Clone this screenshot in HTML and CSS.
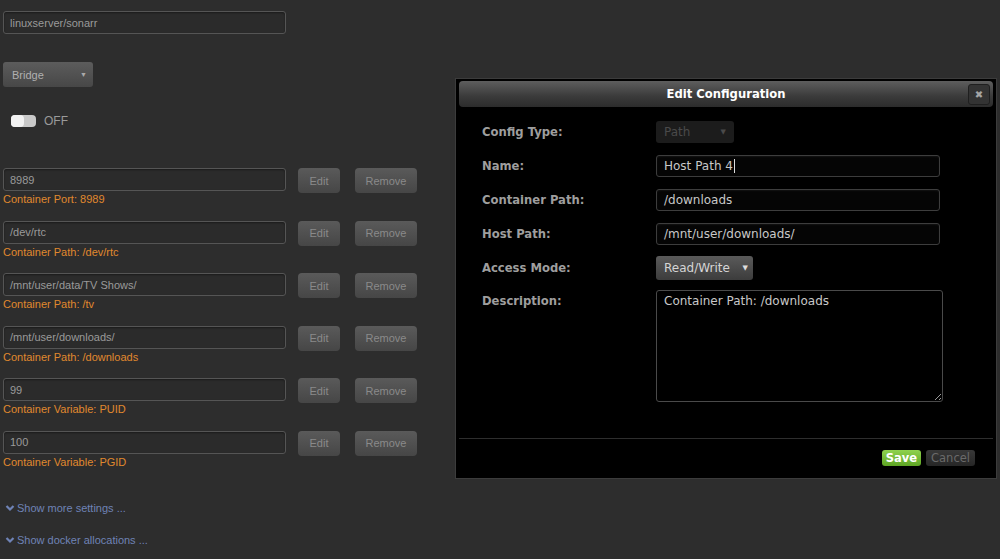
FILE: index.html
```html
<!DOCTYPE html>
<html>
<head>
<meta charset="utf-8">
<link rel="stylesheet" href="styles.css">
</head>
<body>
<div class="page">
  <div class="field wide">linuxserver/sonarr</div>
  <div class="sel net"><span>Bridge</span><span class="arrow">▼</span></div>
  <div class="toggle-row"><span class="toggle"><span class="knob"></span></span><span class="off">OFF</span></div>

  <div class="mappings">
    <div class="map">
      <div class="map-line"><div class="field wide">8989</div><span class="btn edit">Edit</span><span class="btn remove">Remove</span></div>
      <div class="note">Container Port: 8989</div>
    </div>
    <div class="map">
      <div class="map-line"><div class="field wide">/dev/rtc</div><span class="btn edit">Edit</span><span class="btn remove">Remove</span></div>
      <div class="note">Container Path: /dev/rtc</div>
    </div>
    <div class="map">
      <div class="map-line"><div class="field wide">/mnt/user/data/TV Shows/</div><span class="btn edit">Edit</span><span class="btn remove">Remove</span></div>
      <div class="note">Container Path: /tv</div>
    </div>
    <div class="map">
      <div class="map-line"><div class="field wide">/mnt/user/downloads/</div><span class="btn edit">Edit</span><span class="btn remove">Remove</span></div>
      <div class="note">Container Path: /downloads</div>
    </div>
    <div class="map">
      <div class="map-line"><div class="field wide">99</div><span class="btn edit">Edit</span><span class="btn remove">Remove</span></div>
      <div class="note">Container Variable: PUID</div>
    </div>
    <div class="map">
      <div class="map-line"><div class="field wide">100</div><span class="btn edit">Edit</span><span class="btn remove">Remove</span></div>
      <div class="note">Container Variable: PGID</div>
    </div>
  </div>

  <div class="links">
    <div class="link"><svg class="chev" viewBox="0 0 10 8" width="10" height="8"><path d="M1.5 2 L5 5.5 L8.5 2" fill="none" stroke="#6f83b6" stroke-width="2.2"/></svg>Show more settings ...</div>
    <div class="link"><svg class="chev" viewBox="0 0 10 8" width="10" height="8"><path d="M1.5 2 L5 5.5 L8.5 2" fill="none" stroke="#6f83b6" stroke-width="2.2"/></svg>Show docker allocations ...</div>
  </div>
</div>

<div class="dialog">
  <div class="titlebar">
    <span class="title">Edit Configuration</span>
    <span class="close">✖</span>
  </div>
  <div class="form">
    <div class="lbl">Config Type:</div>
    <div class="dsel disabled"><span>Path</span><span class="arrow">▼</span></div>
    <div class="lbl">Name:</div>
    <div class="dinput">Host Path 4<span class="caret"></span></div>
    <div class="lbl">Container Path:</div>
    <div class="dinput">/downloads</div>
    <div class="lbl">Host Path:</div>
    <div class="dinput">/mnt/user/downloads/</div>
    <div class="lbl">Access Mode:</div>
    <div class="dsel access"><span>Read/Write</span><span class="arrow">▼</span></div>
    <div class="lbl top">Description:</div>
    <textarea class="darea">Container Path: /downloads</textarea>
  </div>
  <div class="footer">
    <span class="save">Save</span>
    <span class="cancel">Cancel</span>
  </div>
</div>
</body>
</html>
```

FILE: styles.css
```css
html, body {
  margin: 0;
  padding: 0;
  background: #2d2d2d;
  width: 1000px;
  height: 559px;
  overflow: hidden;
}
body {
  font-family: "Liberation Sans", Arial, sans-serif;
  font-size: 11px;
  position: relative;
}
.page {
  padding: 11px 0 0 3px;
  display: flex;
  flex-direction: column;
}
.field {
  box-sizing: border-box;
  height: 23px;
  border: 1px solid #555;
  border-radius: 3px;
  background: #2b2b2b;
  box-shadow: inset 0 1px 2px rgba(0,0,0,0.4);
  color: #9a9a9a;
  padding: 0 6px;
  display: flex;
  align-items: center;
}
.wide { width: 283px; }
.sel {
  box-sizing: border-box;
  display: flex;
  align-items: center;
  justify-content: space-between;
  border-radius: 3px;
  background: linear-gradient(#5c5c5c, #474747);
  color: #b0b0b0;
  font-size: 11px;
}
.net {
  width: 90px;
  height: 25px;
  margin-top: 28px;
  padding: 0 6px 0 9px;
}
.arrow { font-size: 7px; color: #aaa; }
.toggle-row {
  display: flex;
  align-items: center;
  margin-top: 28px;
  padding-left: 8px;
  height: 12px;
}
.toggle {
  width: 25px;
  height: 12px;
  border-radius: 4px;
  background: #c9c9c9;
  display: flex;
}
.knob {
  width: 13px;
  height: 12px;
  border-radius: 4px;
  background: #f2f2f2;
}
.off {
  color: #9a9a9a;
  font-size: 12px;
  margin-left: 8px;
}
.mappings {
  margin-top: 41px;
  display: flex;
  flex-direction: column;
}
.map {
  height: 52.6px;
}
.map-line {
  display: flex;
  align-items: flex-start;
}
.btn {
  box-sizing: border-box;
  height: 25px;
  border-radius: 4px;
  background: linear-gradient(#5a5a5a, #464646);
  color: #8a8a8a;
  display: flex;
  align-items: center;
  justify-content: center;
  font-size: 11px;
}
.edit { width: 42px; margin-left: 12px; }
.remove { width: 62px; margin-left: 15px; }
.note {
  color: #e0892e;
  margin-top: -1px;
  line-height: 14px;
}
.links {
  margin-top: 17px;
  display: flex;
  flex-direction: column;
  gap: 18px;
}
.link {
  color: #6f83b6;
  display: flex;
  align-items: center;
  height: 14px;
}
.chev { margin: 0 2px 0 2px; }

/* dialog */
.dialog {
  position: absolute;
  left: 455px;
  top: 78px;
  width: 542px;
  height: 401px;
  box-sizing: border-box;
  border: 1px solid #3c3c3c;
  background: #000;
  padding: 2px 3px 3px 3px;
  font-family: "DejaVu Sans", Verdana, sans-serif;
  font-size: 12px;
  display: flex;
  flex-direction: column;
}
.titlebar {
  position: relative;
  height: 26px;
  border-radius: 4px;
  background: linear-gradient(#5e5e5e, #3a3a3a 60%, #2c2c2c);
  display: flex;
  align-items: center;
  justify-content: center;
}
.title {
  color: #fff;
  font-weight: bold;
  font-size: 11.6px;
}
.close {
  position: absolute;
  right: 3px;
  top: 3px;
  width: 22px;
  height: 21px;
  box-sizing: border-box;
  border: 1px solid #1f1f1f;
  border-radius: 3px;
  background: #333;
  color: #a5a5a5;
  font-size: 10px;
  display: flex;
  align-items: center;
  justify-content: center;
}
.form {
  margin-top: 14px;
  padding-left: 23px;
  display: grid;
  grid-template-columns: 174px auto;
  row-gap: 12px;
  justify-items: start;
  align-items: center;
}
.lbl {
  color: #9e9e9e;
  font-weight: bold;
  font-size: 11.6px;
}
.lbl.top { align-self: start; padding-top: 3px; }
.dinput {
  box-sizing: border-box;
  width: 284px;
  height: 22px;
  border: 1px solid #3d3d3d;
  border-radius: 3px;
  box-shadow: inset 0 1px 2px rgba(255,255,255,0.06);
  background: #050505;
  color: #c8c8c8;
  padding: 0 7px;
  display: flex;
  align-items: center;
}
.caret {
  display: inline-block;
  width: 1px;
  height: 14px;
  background: #ddd;
  margin-left: 1px;
}
.dsel {
  box-sizing: border-box;
  display: flex;
  align-items: center;
  justify-content: space-between;
  border-radius: 3px;
}
.dsel.disabled {
  width: 78px;
  height: 22px;
  background: #1c1c1c;
  color: #4a4a4a;
  padding: 0 8px;
}
.dsel.disabled .arrow { color: #4a4a4a; }
.dsel.access {
  width: 97px;
  height: 24px;
  margin: -1px 0 -1px 0;
  background: linear-gradient(#5a5a5a, #3c3c3c);
  color: #d5d5d5;
  padding: 0 5px 0 8px;
}
.dsel.access .arrow { color: #ddd; }
.darea {
  box-sizing: border-box;
  width: 287px;
  height: 112px;
  margin: -1px 0 0 0;
  border: 1px solid #4a4a4a;
  border-radius: 3px;
  background: #000;
  color: #c8c8c8;
  font-family: "DejaVu Sans", Verdana, sans-serif;
  font-size: 12px;
  padding: 3px 7px;
  resize: both;
}
.footer {
  margin-top: 36px;
  border-top: 1px solid #2e2e2e;
  padding: 11px 18px 0 0;
  display: flex;
  justify-content: flex-end;
  gap: 5px;
  font-size: 11.5px;
}
.save {
  width: 39px;
  height: 16px;
  border-radius: 3px;
  background: linear-gradient(#8fd24e, #5ea524);
  color: #fff;
  font-weight: bold;
  display: flex;
  align-items: center;
  justify-content: center;
}
.cancel {
  width: 49px;
  height: 16px;
  border-radius: 3px;
  background: linear-gradient(#383838, #262626);
  color: #6a6a6a;
  display: flex;
  align-items: center;
  justify-content: center;
}
```
